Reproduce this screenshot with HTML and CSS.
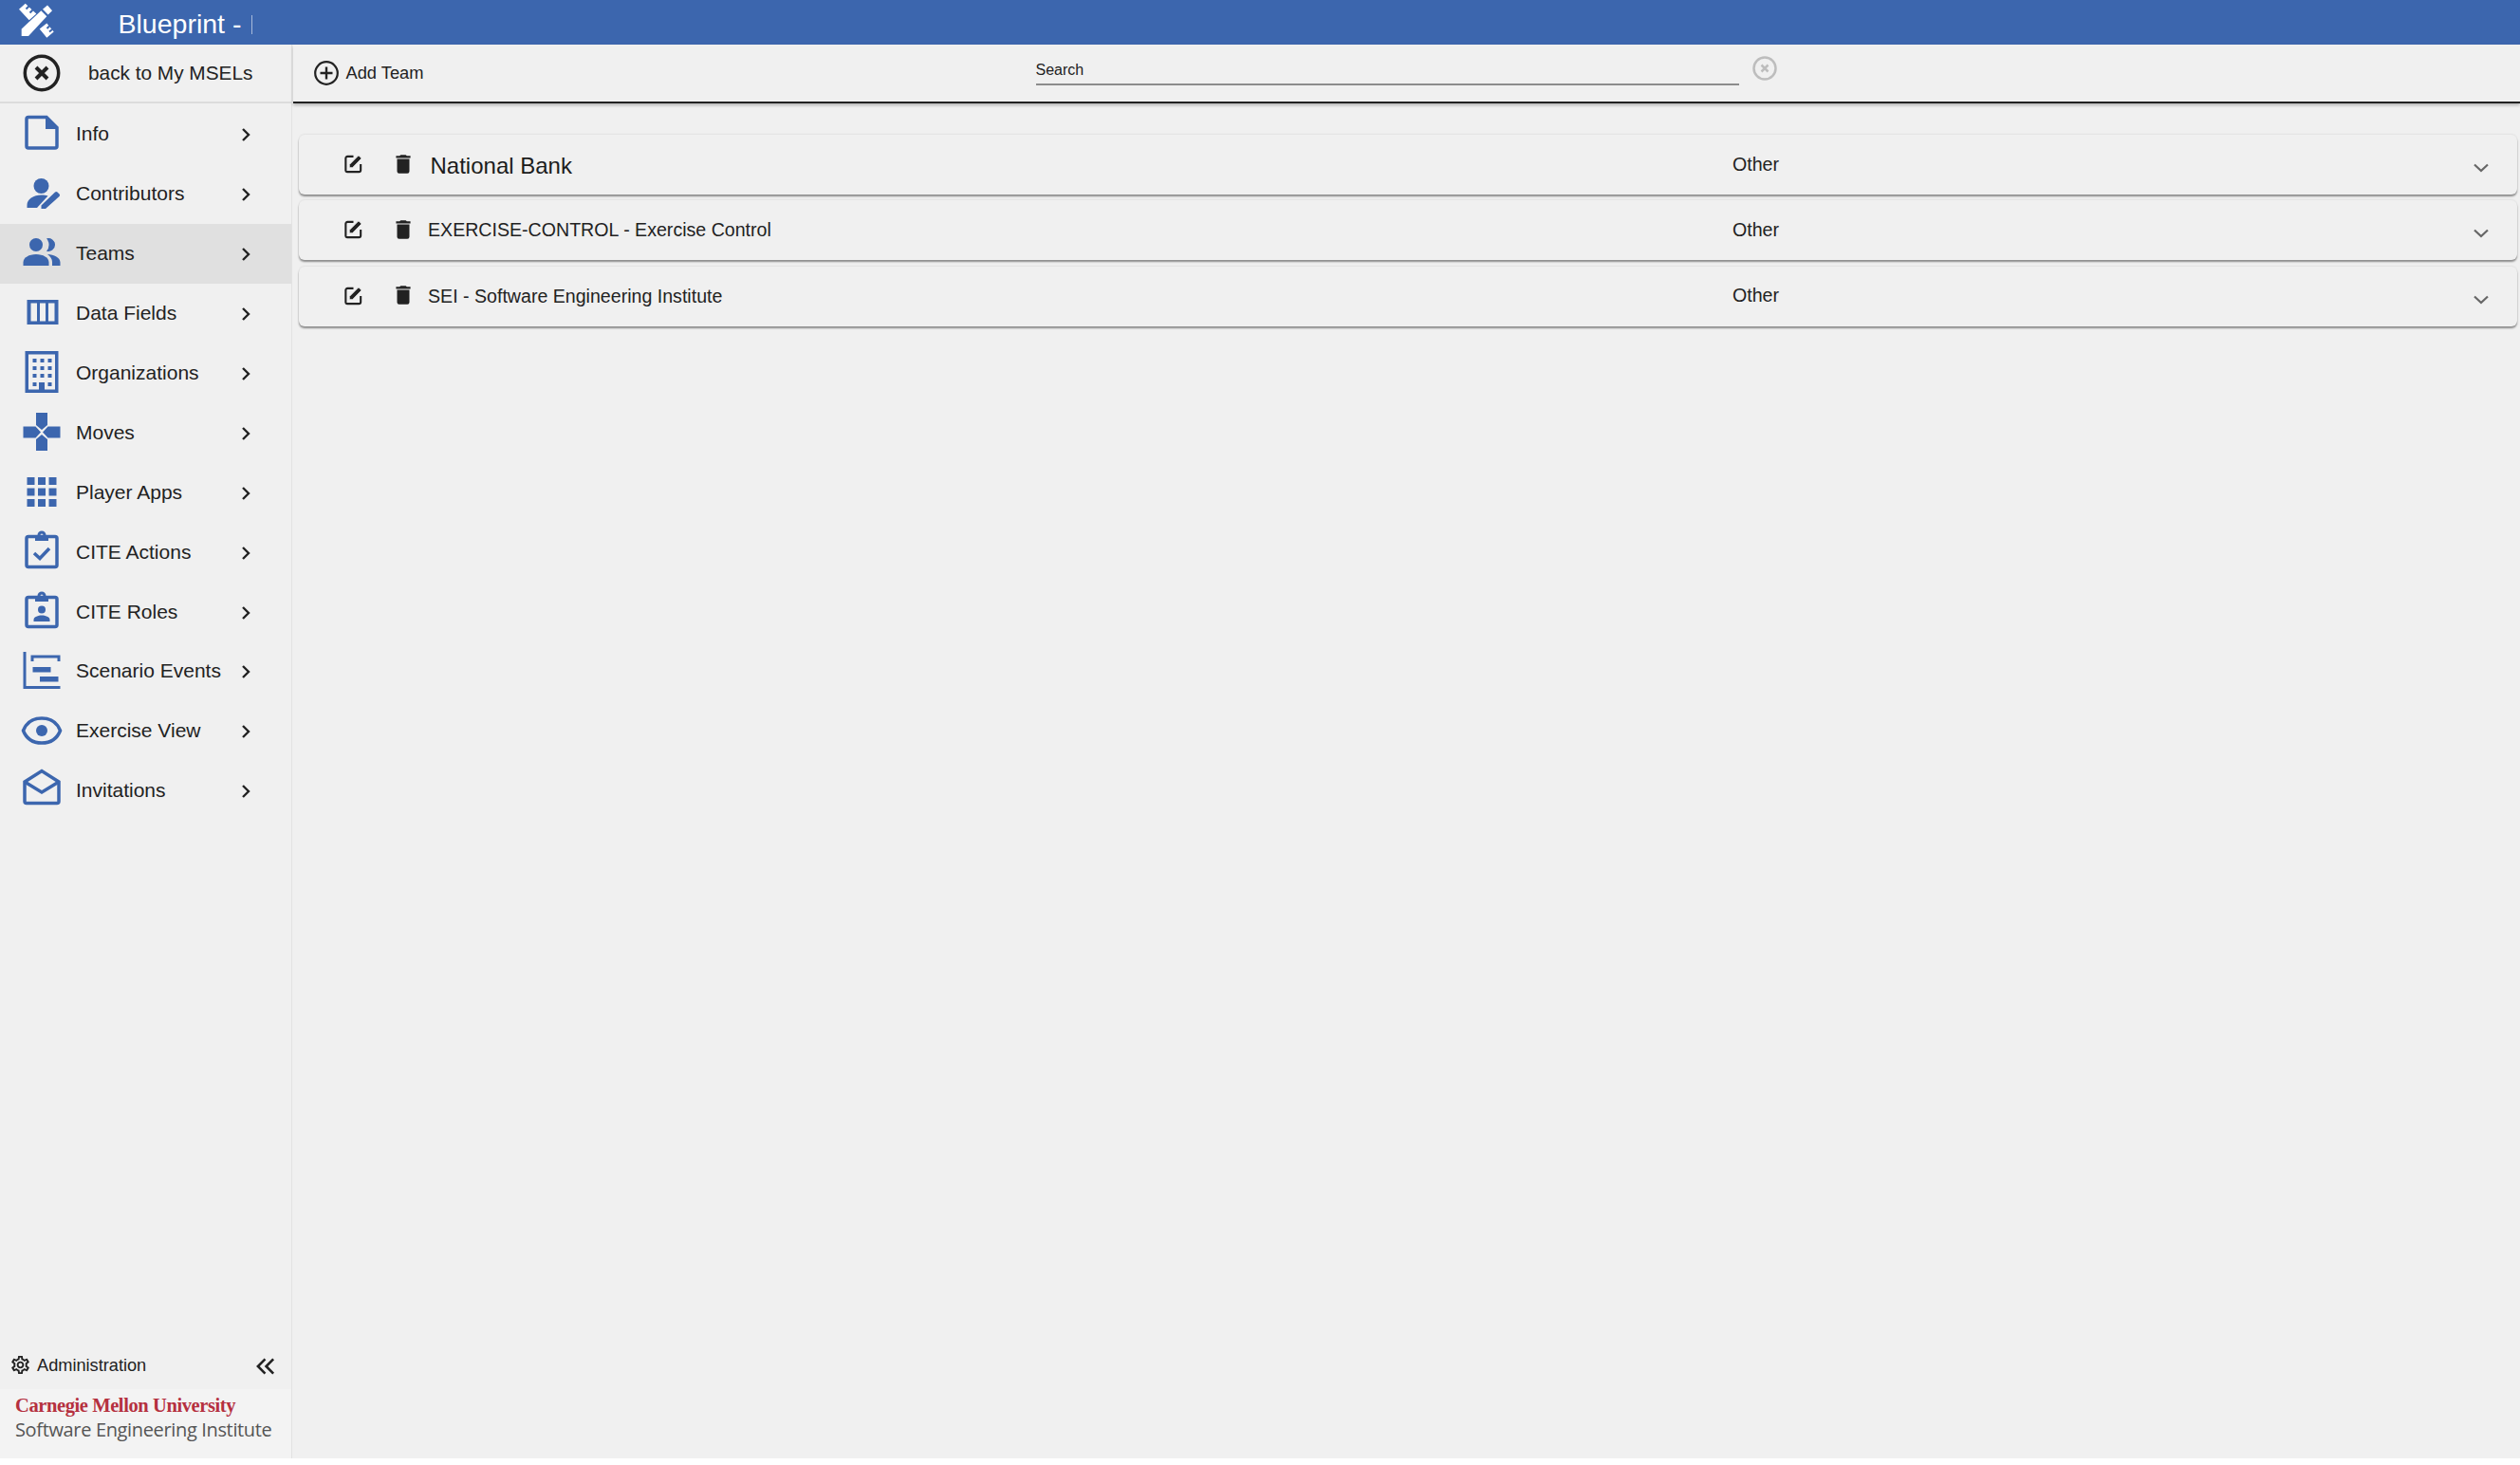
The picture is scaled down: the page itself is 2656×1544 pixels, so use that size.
FILE: index.html
```html
<!DOCTYPE html>
<html lang="en">
<head>
<meta charset="utf-8">
<title>Blueprint</title>
<link rel="stylesheet" href="styles.css">
</head>
<body>
<div class="app">
  <header class="topbar">
    <svg class="brand" viewBox="0 0 40 40" aria-hidden="true">
      <path d="M3.700 34V26.500L24.300 7.200 30.300 13.200 11 34z"/>
      <path d="M26 5.800 31 1.500 36 7.200 31.700 11.500z"/>
      <path d="M1 5.800 7.700-.2 19.300 10.500 11.700 17.200zM22.700 26.500 30.300 20.500 37.700 29.500 30.300 35.800z"/>
      <path class="brand-cut" d="M11.500 2.500 8.500 5.500M15.500 6.500 12.500 9.500M33 23.500 30.500 26M36 27 33 29.500"/>
    </svg>
    <span class="title">Blueprint -</span>
    <span class="caret"></span>
  </header>
  <div class="body">
    <aside class="sidebar">
      <div class="back">
        <svg class="back-icon" viewBox="0 0 48 48"><circle cx="24" cy="24" r="17.700"/><path d="M18 18 30 30M30 18 18 30"/></svg>
        <span>back to My MSELs</span>
      </div>
      <nav class="nav">
        <a class="item">
          <svg class="ico" viewBox="0 0 48 48"><path class="line" d="M10 6.500H29L40 17.500V37a2 2 0 0 1-2 2H10a2 2 0 0 1-2-2V8.500a2 2 0 0 1 2-2z"/><path d="M28 7h2.500L40 16.500V19H28z"/></svg>
          <span class="label">Info</span>
          <svg class="chev" viewBox="0 0 24 24"><path d="M9 6l6 6-6 6"/></svg>
        </a>
        <a class="item">
          <svg class="ico" viewBox="0 0 48 48"><circle cx="23.500" cy="16" r="8"/><path d="M8.500 39v-3c0-6 7-10.500 15-10.500 3 0 5 .4 7 1L19 39z"/><path d="M23.500 40v-3.500L38 22.500a1.800 1.800 0 0 1 2.500 0l2 2a1.800 1.800 0 0 1 0 2.500L28 40z"/></svg>
          <span class="label">Contributors</span>
          <svg class="chev" viewBox="0 0 24 24"><path d="M9 6l6 6-6 6"/></svg>
        </a>
        <a class="item active">
          <svg class="ico" viewBox="0 0 48 48"><circle cx="18" cy="15" r="7"/><path d="M29 8.300a7 7 0 1 1 0 13.400A10 10 0 0 0 29 8.300z"/><path d="M4.500 37v-3.500c0-5 6-8.500 13.500-8.500s13.500 3.500 13.500 8.500V37z"/><path d="M30 25c7 .3 13.500 3.500 13.500 8.500V37H35v-4c0-3-2-6-5-8z"/></svg>
          <span class="label">Teams</span>
          <svg class="chev" viewBox="0 0 24 24"><path d="M9 6l6 6-6 6"/></svg>
        </a>
        <a class="item">
          <svg class="ico" viewBox="0 0 48 48"><path fill-rule="evenodd" d="M8.500 10h33v26h-33zM12.500 13.500V32.500H19V13.500zM22 13.500V32.500H28V13.500zM31 13.500V32.500H37.500V13.500z"/></svg>
          <span class="label">Data Fields</span>
          <svg class="chev" viewBox="0 0 24 24"><path d="M9 6l6 6-6 6"/></svg>
        </a>
        <a class="item">
          <svg class="ico" viewBox="0 0 48 48"><path fill-rule="evenodd" d="M6.500 1h35v44h-35zM10 4.500V41.500H21V34h6V41.500H38V4.500z"/><path d="M14.500 9h4v4h-4zM22.500 9h4v4h-4zM30.500 9h4v4h-4zM14.500 17h4v4h-4zM22.500 17h4v4h-4zM30.500 17h4v4h-4zM14.500 25h4v4h-4zM22.500 25h4v4h-4zM30.500 25h4v4h-4zM14.500 34h4v4h-4zM30.500 34h4v4h-4z"/></svg>
          <span class="label">Organizations</span>
          <svg class="chev" viewBox="0 0 24 24"><path d="M9 6l6 6-6 6"/></svg>
        </a>
        <a class="item">
          <svg class="ico" viewBox="0 0 48 48"><path d="M18 3h12v13l-6 5-6-5zM18 43V31l6-5 6 5v12zM4.500 17.500h13l5.500 6-5.500 6h-13zM43.500 17.500h-13l-5.500 6 5.500 6h13z"/></svg>
          <span class="label">Moves</span>
          <svg class="chev" viewBox="0 0 24 24"><path d="M9 6l6 6-6 6"/></svg>
        </a>
        <a class="item">
          <svg class="ico" viewBox="0 0 48 48"><path d="M8.500 8h8v8h-8zM20 8h8v8h-8zM31.500 8h8v8h-8zM8.500 19.500h8v8h-8zM20 19.500h8v8h-8zM31.500 19.500h8v8h-8zM8.500 31h8v8h-8zM20 31h8v8h-8zM31.500 31h8v8h-8z"/></svg>
          <span class="label">Player Apps</span>
          <svg class="chev" viewBox="0 0 24 24"><path d="M9 6l6 6-6 6"/></svg>
        </a>
        <a class="item">
          <svg class="ico" viewBox="0 0 48 48"><path class="line" d="M10 7.500H38a2 2 0 0 1 2 2V37.500a2 2 0 0 1-2 2H10a2 2 0 0 1-2-2V9.500a2 2 0 0 1 2-2z"/><path fill-rule="evenodd" d="M17 6h2.500a4.500 4.500 0 0 1 9 0H31v6H17zM22.500 6a1.500 1.500 0 1 0 3 0 1.500 1.500 0 0 0-3 0z"/><path class="line" d="M16 25l6 5.500L32 20"/></svg>
          <span class="label">CITE Actions</span>
          <svg class="chev" viewBox="0 0 24 24"><path d="M9 6l6 6-6 6"/></svg>
        </a>
        <a class="item">
          <svg class="ico" viewBox="0 0 48 48"><path class="line" d="M10 8.500H38a2 2 0 0 1 2 2V37.500a2 2 0 0 1-2 2H10a2 2 0 0 1-2-2V10.500a2 2 0 0 1 2-2z"/><path fill-rule="evenodd" d="M17 7h2.500a4.500 4.500 0 0 1 9 0H31v6H17zM22.500 7a1.500 1.500 0 1 0 3 0 1.500 1.500 0 0 0-3 0z"/><circle cx="24" cy="21.500" r="4"/><path d="M15.500 34v-2c0-3 5-4.500 8.500-4.500s8.500 1.500 8.500 4.500v2z"/></svg>
          <span class="label">CITE Roles</span>
          <svg class="chev" viewBox="0 0 24 24"><path d="M9 6l6 6-6 6"/></svg>
        </a>
        <a class="item">
          <svg class="ico" viewBox="0 0 48 48"><path d="M4.500 4h3v36h36v3h-39z"/><path d="M12.500 7.500h31v6.500h-3v-3.500h-25V14h-3z"/><path d="M14.500 20h19v5.500h-19zM22 30h19.500v5.500H22z"/></svg>
          <span class="label">Scenario Events</span>
          <svg class="chev" viewBox="0 0 24 24"><path d="M9 6l6 6-6 6"/></svg>
        </a>
        <a class="item">
          <svg class="ico" viewBox="0 0 48 48"><path class="line" d="M4.500 24C8 15 15.500 11 24 11s16 4 19.500 13C40 33 32.500 37 24 37S8 33 4.500 24z"/><circle cx="24" cy="24" r="6"/></svg>
          <span class="label">Exercise View</span>
          <svg class="chev" viewBox="0 0 24 24"><path d="M9 6l6 6-6 6"/></svg>
        </a>
        <a class="item">
          <svg class="ico" viewBox="0 0 48 48"><path class="line" d="M6 15 24 3.500 42 15V35.500a2 2 0 0 1-2 2H8a2 2 0 0 1-2-2z"/><path class="line" d="M6 15 24 26 42 15"/></svg>
          <span class="label">Invitations</span>
          <svg class="chev" viewBox="0 0 24 24"><path d="M9 6l6 6-6 6"/></svg>
        </a>
      </nav>
      <div class="admin">
        <svg class="gear" viewBox="0 0 24 24"><path d="M19.430 12.980c.04-.32.07-.64.07-.98 0-.34-.03-.66-.07-.98l2.110-1.650c.19-.15.24-.42.12-.64l-2-3.460c-.09-.16-.26-.25-.44-.25-.06 0-.12.01-.17.03l-2.490 1c-.52-.4-1.080-.73-1.690-.98l-.38-2.650C14.460 2.180 14.250 2 14 2h-4c-.25 0-.46.18-.49.42l-.38 2.650c-.61.25-1.170.59-1.690.98l-2.490-1c-.06-.02-.12-.03-.18-.03-.17 0-.34.09-.43.25l-2 3.460c-.13.22-.07.49.12.64l2.110 1.650c-.04.32-.07.65-.07.98 0 .33.03.66.07.98l-2.110 1.650c-.19.15-.24.42-.12.64l2 3.460c.09.16.26.25.44.25.06 0 .12-.01.17-.03l2.490-1c.52.4 1.080.73 1.690.98l.38 2.650c.03.24.24.42.49.42h4c.25 0 .46-.18.49-.42l.38-2.650c.61-.25 1.170-.59 1.690-.98l2.490 1c.06.02.12.03.18.03.17 0 .34-.09.43-.25l2-3.460c.12-.22.07-.49-.12-.64l-2.110-1.650zm-1.980-1.710c.04.31.05.52.05.73 0 .21-.02.43-.05.73l-.14 1.130.89.7 1.080.84-.7 1.210-1.270-.51-1.040-.42-.9.68c-.43.32-.84.56-1.250.73l-1.060.43-.16 1.130-.2 1.350h-1.400l-.19-1.350-.16-1.130-1.060-.43c-.43-.18-.83-.41-1.230-.71l-.91-.7-1.060.43-1.270.51-.7-1.210 1.080-.84.89-.7-.14-1.130c-.03-.31-.05-.54-.05-.74s.02-.43.05-.73l.14-1.130-.89-.7-1.080-.84.7-1.210 1.270.51 1.040.42.9-.68c.43-.32.84-.56 1.250-.73l1.060-.43.16-1.130.2-1.350h1.390l.19 1.350.16 1.130 1.060.43c.43.18.83.41 1.230.71l.91.7 1.060-.43 1.270-.51.7 1.210-1.070.85-.89.7.14 1.130zM12 8c-2.210 0-4 1.790-4 4s1.790 4 4 4 4-1.790 4-4-1.790-4-4-4zm0 6c-1.100 0-2-.9-2-2s.9-2 2-2 2 .9 2 2-.9 2-2 2z"/></svg>
        <span class="admin-label">Administration</span>
        <svg class="collapse" viewBox="0 0 24 24"><path d="M11.500 5l-7 7 7 7M19.500 5l-7 7 7 7"/></svg>
      </div>
      <div class="sei">
        <div class="cmu">Carnegie Mellon University</div>
        <div class="sei-name">Software Engineering Institute</div>
      </div>
    </aside>
    <main class="main">
      <div class="toolbar">
        <button class="add">
          <svg class="add-icon" viewBox="0 0 26 26"><circle cx="13" cy="13" r="11.800"/><path d="M13 6.500v13M6.500 13h13"/></svg>
          <span>Add Team</span>
        </button>
        <div class="search"><span>Search</span></div>
        <svg class="clear" viewBox="0 0 26 26"><circle cx="13" cy="13" r="11.500"/><path d="M9.500 9.500l7 7M16.500 9.500l-7 7"/></svg>
      </div>
      <div class="list">
        <div class="card">
          <svg class="edit" viewBox="0 0 24 24"><path d="M20 12.500V19a2 2 0 0 1-2 2H5a1.500 1.500 0 0 1-1.500-1.500V6A2 2 0 0 1 5.500 4H12"/><path class="solid" d="M7.500 16.500V13l9.500-9.500a1 1 0 0 1 1.400 0l2 2a1 1 0 0 1 0 1.400L11 16.500z"/></svg>
          <svg class="trash" viewBox="0 0 24 24"><path d="M6 19a2 2 0 0 0 2 2h8a2 2 0 0 0 2-2V7H6zM19 4h-3.500l-1-1h-5l-1 1H5v2h14z"/></svg>
          <span class="name big">National Bank</span>
          <span class="type">Other</span>
          <svg class="expand" viewBox="0 0 24 24"><path d="M5 8.500l7 6.500 7-6.500"/></svg>
        </div>
        <div class="card">
          <svg class="edit" viewBox="0 0 24 24"><path d="M20 12.500V19a2 2 0 0 1-2 2H5a1.500 1.500 0 0 1-1.500-1.500V6A2 2 0 0 1 5.500 4H12"/><path class="solid" d="M7.500 16.500V13l9.500-9.500a1 1 0 0 1 1.400 0l2 2a1 1 0 0 1 0 1.400L11 16.500z"/></svg>
          <svg class="trash" viewBox="0 0 24 24"><path d="M6 19a2 2 0 0 0 2 2h8a2 2 0 0 0 2-2V7H6zM19 4h-3.500l-1-1h-5l-1 1H5v2h14z"/></svg>
          <span class="name">EXERCISE-CONTROL - Exercise Control</span>
          <span class="type">Other</span>
          <svg class="expand" viewBox="0 0 24 24"><path d="M5 8.500l7 6.500 7-6.500"/></svg>
        </div>
        <div class="card">
          <svg class="edit" viewBox="0 0 24 24"><path d="M20 12.500V19a2 2 0 0 1-2 2H5a1.500 1.500 0 0 1-1.500-1.500V6A2 2 0 0 1 5.500 4H12"/><path class="solid" d="M7.500 16.500V13l9.500-9.500a1 1 0 0 1 1.400 0l2 2a1 1 0 0 1 0 1.400L11 16.500z"/></svg>
          <svg class="trash" viewBox="0 0 24 24"><path d="M6 19a2 2 0 0 0 2 2h8a2 2 0 0 0 2-2V7H6zM19 4h-3.500l-1-1h-5l-1 1H5v2h14z"/></svg>
          <span class="name">SEI - Software Engineering Institute</span>
          <span class="type">Other</span>
          <svg class="expand" viewBox="0 0 24 24"><path d="M5 8.500l7 6.500 7-6.500"/></svg>
        </div>
      </div>
    </main>
  </div>
</div>
</body>
</html>
```

FILE: styles.css
```css
* { box-sizing: border-box; }
html, body { margin: 0; background: #fff; }
body { font-family: "Liberation Sans", Arial, sans-serif; color: #222; }
.app { height: 1537px; display: flex; flex-direction: column; background: #f0f0f0; overflow: hidden; }

.topbar { height: 47px; flex: none; background: #3c66ae; display: flex; align-items: center; color: #fff; }
.brand { width: 40px; height: 40px; margin-left: 19px; fill: #fff; flex: none; overflow: visible; }
.brand-cut { fill: none; stroke: #3c66ae; stroke-width: 2; }
.title { margin-left: 65.500px; font-size: 28.500px; line-height: 47px; padding-top: 4px; }
.caret { width: 1px; height: 20px; margin-left: 11px; margin-top: 4px; background: rgba(255,255,255,.55); }

.body { flex: 1; display: flex; min-height: 0; }
.sidebar { width: 308px; flex: none; display: flex; flex-direction: column; border-right: 1px solid #e2e2e2; }
.back { height: 62px; flex: none; display: flex; align-items: center; padding-left: 19.500px; border-bottom: 2px solid #dcdcdc; font-size: 20.800px; }
.back-icon { width: 48px; height: 48px; fill: none; stroke: #222; stroke-width: 3.500; margin-right: 25.500px; }
.back-icon path { stroke-width: 4; }

.nav { display: flex; flex-direction: column; flex: 1; padding-top: 1px; }
.item { height: 62.900px; flex: none; display: flex; align-items: center; padding-left: 19.500px; font-size: 21px; }
.item.active { background: #e0e0e0; }
.ico { width: 48px; height: 48px; flex: none; fill: #3c66ae; overflow: visible; }
.ico .line { fill: none; stroke: #3c66ae; stroke-width: 3.500; }
.label { margin-left: 12.500px; width: 167px; white-space: nowrap; }
.chev { width: 24px; height: 24px; flex: none; fill: none; stroke: #222; stroke-width: 2.400; margin-top: 2px; }

.admin { height: 60px; flex: none; display: flex; align-items: center; padding-left: 10px; font-size: 18.200px; padding-top: 11px; }
.gear { width: 23px; height: 23px; margin-top: -3px; fill: #222; flex: none; }
.admin-label { margin-left: 6px; width: 235px; white-space: nowrap; }
.collapse { width: 26px; height: 26px; fill: none; stroke: #222; stroke-width: 2.400; flex: none; margin-left: -7px; }

.sei { height: 73px; flex: none; padding: 4px 0 0 16px; background: #f3f3f3; }
.cmu { font-family: "Liberation Serif", serif; font-weight: 700; font-size: 20.500px; letter-spacing: -.4px; color: #b5303f; line-height: 26px; white-space: nowrap; }
.sei-name { font-family: "Open Sans", sans-serif; font-size: 20px; letter-spacing: -.35px; color: #555; line-height: 24px; margin-top: 1px; white-space: nowrap; }

.main { flex: 1; min-width: 0; display: flex; flex-direction: column; padding-left: 1px; }
.toolbar { height: 62px; flex: none; display: flex; align-items: center; border-bottom: 2px solid #222; box-shadow: 0 2px 3px rgba(0,0,0,.25); position: relative; }
.add { display: flex; align-items: center; gap: 8px; border: 0; padding: 0; margin-left: 21.500px; background: none; color: #222; font: inherit; font-size: 18.300px; width: 761px; }
.add-icon { width: 26px; height: 26px; fill: none; stroke: #222; stroke-width: 2.200; flex: none; }
.add-icon path { stroke-width: 2.400; }
.search { width: 741px; height: 28px; border-bottom: 2px solid #8c8c8c; font-size: 16px; line-height: 24px; position: relative; top: -1px; }
.clear { width: 26px; height: 26px; margin-left: 14px; fill: none; stroke: #bdbdbd; stroke-width: 2.500; position: relative; top: -5px; }

.list { padding: 33px 3px 0 6px; display: flex; flex-direction: column; gap: 6.400px; }
.card { height: 63px; display: flex; align-items: center; border-radius: 6px; background: #f0f0f0; box-shadow: 0 2px 2px rgba(0,0,0,.42), 0 -1px 2px rgba(0,0,0,.06); }
.edit { width: 23px; height: 23px; margin-left: 46px; margin-top: -2px; fill: none; stroke: #222; stroke-width: 2.200; flex: none; }
.edit .solid { fill: #222; stroke: #f0f0f0; stroke-width: 1; }
.trash { width: 26px; height: 26px; margin-left: 27.500px; margin-top: -2px; fill: #222; flex: none; }
.name { margin-left: 13.500px; width: 1375px; font-size: 19.600px; white-space: nowrap; }
.name.big { font-size: 24px; margin-left: 16px; width: 1372.500px; margin-top: 2px; color: #1c1c1c; }
.type { font-size: 19.600px; width: 779px; margin-top: -1px; }
.expand { width: 24px; height: 24px; fill: none; stroke: #666; stroke-width: 2.200; flex: none; margin-left: -2px; margin-top: 7px; }
```
